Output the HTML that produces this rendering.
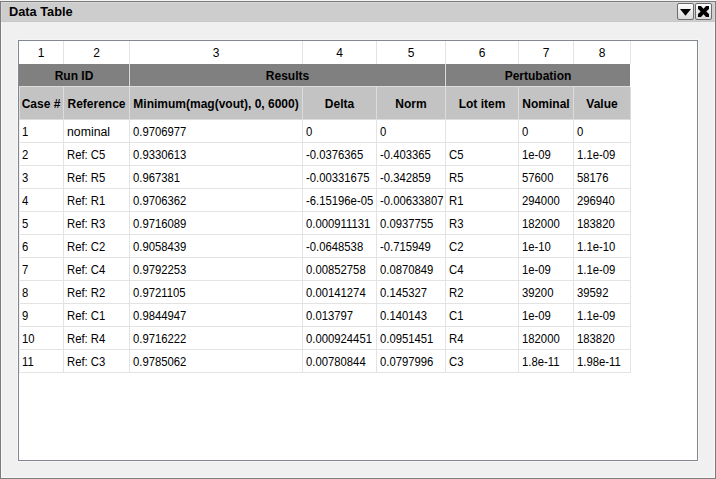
<!DOCTYPE html>
<html><head><meta charset="utf-8"><style>
html,body{margin:0;padding:0;width:716px;height:479px;overflow:hidden;background:#f4f4f4}
body>div{position:absolute}
.title{font:bold 12px/18px "Liberation Sans",sans-serif;transform:scaleX(1.065);transform-origin:0 0;color:#000;white-space:nowrap}
.btn{position:absolute;width:15px;height:15px;border:1px solid #6d6d6d;border-radius:2px;background:linear-gradient(#fdfdfd,#dadada)}
.num{font:12px/23px "Liberation Sans",sans-serif;color:#000;white-space:nowrap}
.hb{font:bold 12px/22px "Liberation Sans",sans-serif;color:#000;white-space:nowrap}
.hd{font:bold 12px/33px "Liberation Sans",sans-serif;color:#000;white-space:nowrap}
.wd{font-size:12.3px !important}
.td{font:11.3px/22px "Liberation Sans",sans-serif;transform:scaleY(1.1);transform-origin:0 14.74px;color:#000;white-space:nowrap;overflow:visible}
</style></head><body>
<div style="left:0px;top:0px;width:716px;height:479px;background:#f4f4f4;"></div>
<div style="left:0px;top:1px;width:716px;height:478px;background:#7b7b7b;"></div>
<div style="left:1px;top:2px;width:714px;height:476px;background:#f8f8f8;"></div>
<div style="left:2px;top:3px;width:712px;height:474px;background:#f0f0f0;"></div>
<div style="left:1px;top:2px;width:714px;height:20px;background:#d6d6d6;"></div>
<div style="left:2px;top:3px;width:712px;height:18px;background:#cdcdcd;"></div>
<div style="left:1px;top:21px;width:714px;height:1px;background:#c9c9c9;"></div>
<div class="title" style="left:9px;top:3px;width:200px;text-align:left;">Data Table</div>
<div class="btn" style="left:677px;top:3px;"></div>
<div class="btn" style="left:695px;top:3px;"></div>
<svg style="position:absolute;left:677px;top:3px" width="17" height="17"><polygon points="3,6 14,6 8.5,12.7" fill="#000"/></svg>
<svg style="position:absolute;left:695px;top:3px" width="17" height="17"><polygon points="3,3 6,3 8.5,5.7 11,3 14,3 14,6 11.3,8.5 14,11 14,14 11,14 8.5,11.3 6,14 3,14 3,11 5.7,8.5 3,6" fill="#000"/></svg>
<div style="left:17px;top:39px;width:682px;height:423px;background:#f6f6f6;"></div>
<div style="left:18px;top:40px;width:680px;height:421px;background:#828790;"></div>
<div style="left:19px;top:41px;width:678px;height:419px;background:#ffffff;"></div>
<div class="num" style="left:19px;top:42px;width:44px;text-align:center;">1</div>
<div style="left:63px;top:41px;width:1px;height:23px;background:#e3e3e3;"></div>
<div class="num" style="left:64px;top:42px;width:65px;text-align:center;">2</div>
<div style="left:129px;top:41px;width:1px;height:23px;background:#e3e3e3;"></div>
<div class="num" style="left:130px;top:42px;width:172px;text-align:center;">3</div>
<div style="left:302px;top:41px;width:1px;height:23px;background:#e3e3e3;"></div>
<div class="num" style="left:303px;top:42px;width:73px;text-align:center;">4</div>
<div style="left:376px;top:41px;width:1px;height:23px;background:#e3e3e3;"></div>
<div class="num" style="left:377px;top:42px;width:68px;text-align:center;">5</div>
<div style="left:445px;top:41px;width:1px;height:23px;background:#e3e3e3;"></div>
<div class="num" style="left:446px;top:42px;width:72px;text-align:center;">6</div>
<div style="left:518px;top:41px;width:1px;height:23px;background:#e3e3e3;"></div>
<div class="num" style="left:519px;top:42px;width:54px;text-align:center;">7</div>
<div style="left:573px;top:41px;width:1px;height:23px;background:#e3e3e3;"></div>
<div class="num" style="left:574px;top:42px;width:56px;text-align:center;">8</div>
<div style="left:630px;top:41px;width:1px;height:23px;background:#e3e3e3;"></div>
<div style="left:19px;top:64px;width:611px;height:22px;background:#808080;"></div>
<div style="left:19px;top:86px;width:611px;height:1px;background:#dcdcdc;"></div>
<div class="hb" style="left:19px;top:65px;width:110px;text-align:center;">Run ID</div>
<div class="hb" style="left:130px;top:65px;width:315px;text-align:center;">Results</div>
<div class="hb" style="left:446px;top:65px;width:184px;text-align:center;">Pertubation</div>
<div style="left:128px;top:64px;width:1px;height:22px;background:#7a7a7a;"></div>
<div style="left:129px;top:64px;width:1px;height:22px;background:#dcdcdc;"></div>
<div style="left:444px;top:64px;width:1px;height:22px;background:#7a7a7a;"></div>
<div style="left:445px;top:64px;width:1px;height:22px;background:#dcdcdc;"></div>
<div style="left:19px;top:87px;width:611px;height:33px;background:#c3c3c3;"></div>
<div class="hd" style="left:19px;top:88px;width:44px;text-align:center;">Case #</div>
<div style="left:63px;top:87px;width:1px;height:33px;background:#dcdcdc;"></div>
<div class="hd" style="left:64px;top:88px;width:65px;text-align:center;">Reference</div>
<div style="left:129px;top:87px;width:1px;height:33px;background:#dcdcdc;"></div>
<div class="hd" style="left:130px;top:88px;width:172px;text-align:center;">Minimum(mag(vout), 0, 6000)</div>
<div style="left:302px;top:87px;width:1px;height:33px;background:#dcdcdc;"></div>
<div class="hd" style="left:303px;top:88px;width:73px;text-align:center;">Delta</div>
<div style="left:376px;top:87px;width:1px;height:33px;background:#dcdcdc;"></div>
<div class="hd" style="left:377px;top:88px;width:68px;text-align:center;">Norm</div>
<div style="left:445px;top:87px;width:1px;height:33px;background:#dcdcdc;"></div>
<div class="hd" style="left:446px;top:88px;width:72px;text-align:center;">Lot item</div>
<div style="left:518px;top:87px;width:1px;height:33px;background:#dcdcdc;"></div>
<div class="hd" style="left:519px;top:88px;width:54px;text-align:center;">Nominal</div>
<div style="left:573px;top:87px;width:1px;height:33px;background:#dcdcdc;"></div>
<div class="hd" style="left:574px;top:88px;width:56px;text-align:center;">Value</div>
<div style="left:630px;top:87px;width:1px;height:33px;background:#dcdcdc;"></div>
<div style="left:19px;top:87px;width:1px;height:33px;background:#dcdcdc;"></div>
<div style="left:19px;top:119px;width:611px;height:1px;background:#dcdcdc;"></div>
<div class="td" style="left:22px;top:121px;width:41px;text-align:left;">1</div>
<div class="td wd" style="left:67px;top:121px;width:62px;text-align:left;">nominal</div>
<div class="td" style="left:133px;top:121px;width:169px;text-align:left;">0.9706977</div>
<div class="td" style="left:306px;top:121px;width:70px;text-align:left;">0</div>
<div class="td" style="left:380px;top:121px;width:65px;text-align:left;">0</div>
<div class="td" style="left:449px;top:121px;width:69px;text-align:left;"></div>
<div class="td" style="left:522px;top:121px;width:51px;text-align:left;">0</div>
<div class="td" style="left:577px;top:121px;width:53px;text-align:left;">0</div>
<div style="left:20px;top:142px;width:610px;height:1px;background:#e3e3e3;"></div>
<div class="td" style="left:22px;top:144px;width:41px;text-align:left;">2</div>
<div class="td" style="left:67px;top:144px;width:62px;text-align:left;">Ref: C5</div>
<div class="td" style="left:133px;top:144px;width:169px;text-align:left;">0.9330613</div>
<div class="td" style="left:306px;top:144px;width:70px;text-align:left;">-0.0376365</div>
<div class="td" style="left:380px;top:144px;width:65px;text-align:left;">-0.403365</div>
<div class="td" style="left:449px;top:144px;width:69px;text-align:left;">C5</div>
<div class="td" style="left:522px;top:144px;width:51px;text-align:left;">1e-09</div>
<div class="td" style="left:577px;top:144px;width:53px;text-align:left;">1.1e-09</div>
<div style="left:20px;top:165px;width:610px;height:1px;background:#e3e3e3;"></div>
<div class="td" style="left:22px;top:167px;width:41px;text-align:left;">3</div>
<div class="td" style="left:67px;top:167px;width:62px;text-align:left;">Ref: R5</div>
<div class="td" style="left:133px;top:167px;width:169px;text-align:left;">0.967381</div>
<div class="td" style="left:306px;top:167px;width:70px;text-align:left;">-0.00331675</div>
<div class="td" style="left:380px;top:167px;width:65px;text-align:left;">-0.342859</div>
<div class="td" style="left:449px;top:167px;width:69px;text-align:left;">R5</div>
<div class="td" style="left:522px;top:167px;width:51px;text-align:left;">57600</div>
<div class="td" style="left:577px;top:167px;width:53px;text-align:left;">58176</div>
<div style="left:20px;top:188px;width:610px;height:1px;background:#e3e3e3;"></div>
<div class="td" style="left:22px;top:190px;width:41px;text-align:left;">4</div>
<div class="td" style="left:67px;top:190px;width:62px;text-align:left;">Ref: R1</div>
<div class="td" style="left:133px;top:190px;width:169px;text-align:left;">0.9706362</div>
<div class="td" style="left:306px;top:190px;width:70px;text-align:left;">-6.15196e-05</div>
<div class="td" style="left:380px;top:190px;width:65px;text-align:left;">-0.00633807</div>
<div class="td" style="left:449px;top:190px;width:69px;text-align:left;">R1</div>
<div class="td" style="left:522px;top:190px;width:51px;text-align:left;">294000</div>
<div class="td" style="left:577px;top:190px;width:53px;text-align:left;">296940</div>
<div style="left:20px;top:211px;width:610px;height:1px;background:#e3e3e3;"></div>
<div class="td" style="left:22px;top:213px;width:41px;text-align:left;">5</div>
<div class="td" style="left:67px;top:213px;width:62px;text-align:left;">Ref: R3</div>
<div class="td" style="left:133px;top:213px;width:169px;text-align:left;">0.9716089</div>
<div class="td" style="left:306px;top:213px;width:70px;text-align:left;">0.000911131</div>
<div class="td" style="left:380px;top:213px;width:65px;text-align:left;">0.0937755</div>
<div class="td" style="left:449px;top:213px;width:69px;text-align:left;">R3</div>
<div class="td" style="left:522px;top:213px;width:51px;text-align:left;">182000</div>
<div class="td" style="left:577px;top:213px;width:53px;text-align:left;">183820</div>
<div style="left:20px;top:234px;width:610px;height:1px;background:#e3e3e3;"></div>
<div class="td" style="left:22px;top:236px;width:41px;text-align:left;">6</div>
<div class="td" style="left:67px;top:236px;width:62px;text-align:left;">Ref: C2</div>
<div class="td" style="left:133px;top:236px;width:169px;text-align:left;">0.9058439</div>
<div class="td" style="left:306px;top:236px;width:70px;text-align:left;">-0.0648538</div>
<div class="td" style="left:380px;top:236px;width:65px;text-align:left;">-0.715949</div>
<div class="td" style="left:449px;top:236px;width:69px;text-align:left;">C2</div>
<div class="td" style="left:522px;top:236px;width:51px;text-align:left;">1e-10</div>
<div class="td" style="left:577px;top:236px;width:53px;text-align:left;">1.1e-10</div>
<div style="left:20px;top:257px;width:610px;height:1px;background:#e3e3e3;"></div>
<div class="td" style="left:22px;top:259px;width:41px;text-align:left;">7</div>
<div class="td" style="left:67px;top:259px;width:62px;text-align:left;">Ref: C4</div>
<div class="td" style="left:133px;top:259px;width:169px;text-align:left;">0.9792253</div>
<div class="td" style="left:306px;top:259px;width:70px;text-align:left;">0.00852758</div>
<div class="td" style="left:380px;top:259px;width:65px;text-align:left;">0.0870849</div>
<div class="td" style="left:449px;top:259px;width:69px;text-align:left;">C4</div>
<div class="td" style="left:522px;top:259px;width:51px;text-align:left;">1e-09</div>
<div class="td" style="left:577px;top:259px;width:53px;text-align:left;">1.1e-09</div>
<div style="left:20px;top:280px;width:610px;height:1px;background:#e3e3e3;"></div>
<div class="td" style="left:22px;top:282px;width:41px;text-align:left;">8</div>
<div class="td" style="left:67px;top:282px;width:62px;text-align:left;">Ref: R2</div>
<div class="td" style="left:133px;top:282px;width:169px;text-align:left;">0.9721105</div>
<div class="td" style="left:306px;top:282px;width:70px;text-align:left;">0.00141274</div>
<div class="td" style="left:380px;top:282px;width:65px;text-align:left;">0.145327</div>
<div class="td" style="left:449px;top:282px;width:69px;text-align:left;">R2</div>
<div class="td" style="left:522px;top:282px;width:51px;text-align:left;">39200</div>
<div class="td" style="left:577px;top:282px;width:53px;text-align:left;">39592</div>
<div style="left:20px;top:303px;width:610px;height:1px;background:#e3e3e3;"></div>
<div class="td" style="left:22px;top:305px;width:41px;text-align:left;">9</div>
<div class="td" style="left:67px;top:305px;width:62px;text-align:left;">Ref: C1</div>
<div class="td" style="left:133px;top:305px;width:169px;text-align:left;">0.9844947</div>
<div class="td" style="left:306px;top:305px;width:70px;text-align:left;">0.013797</div>
<div class="td" style="left:380px;top:305px;width:65px;text-align:left;">0.140143</div>
<div class="td" style="left:449px;top:305px;width:69px;text-align:left;">C1</div>
<div class="td" style="left:522px;top:305px;width:51px;text-align:left;">1e-09</div>
<div class="td" style="left:577px;top:305px;width:53px;text-align:left;">1.1e-09</div>
<div style="left:20px;top:326px;width:610px;height:1px;background:#e3e3e3;"></div>
<div class="td" style="left:22px;top:328px;width:41px;text-align:left;">10</div>
<div class="td" style="left:67px;top:328px;width:62px;text-align:left;">Ref: R4</div>
<div class="td" style="left:133px;top:328px;width:169px;text-align:left;">0.9716222</div>
<div class="td" style="left:306px;top:328px;width:70px;text-align:left;">0.000924451</div>
<div class="td" style="left:380px;top:328px;width:65px;text-align:left;">0.0951451</div>
<div class="td" style="left:449px;top:328px;width:69px;text-align:left;">R4</div>
<div class="td" style="left:522px;top:328px;width:51px;text-align:left;">182000</div>
<div class="td" style="left:577px;top:328px;width:53px;text-align:left;">183820</div>
<div style="left:20px;top:349px;width:610px;height:1px;background:#e3e3e3;"></div>
<div class="td" style="left:22px;top:351px;width:41px;text-align:left;">11</div>
<div class="td" style="left:67px;top:351px;width:62px;text-align:left;">Ref: C3</div>
<div class="td" style="left:133px;top:351px;width:169px;text-align:left;">0.9785062</div>
<div class="td" style="left:306px;top:351px;width:70px;text-align:left;">0.00780844</div>
<div class="td" style="left:380px;top:351px;width:65px;text-align:left;">0.0797996</div>
<div class="td" style="left:449px;top:351px;width:69px;text-align:left;">C3</div>
<div class="td" style="left:522px;top:351px;width:51px;text-align:left;">1.8e-11</div>
<div class="td" style="left:577px;top:351px;width:53px;text-align:left;">1.98e-11</div>
<div style="left:20px;top:372px;width:610px;height:1px;background:#e3e3e3;"></div>
<div style="left:63px;top:120px;width:1px;height:253px;background:#e3e3e3;"></div>
<div style="left:129px;top:120px;width:1px;height:253px;background:#e3e3e3;"></div>
<div style="left:302px;top:120px;width:1px;height:253px;background:#e3e3e3;"></div>
<div style="left:376px;top:120px;width:1px;height:253px;background:#e3e3e3;"></div>
<div style="left:445px;top:120px;width:1px;height:253px;background:#e3e3e3;"></div>
<div style="left:518px;top:120px;width:1px;height:253px;background:#e3e3e3;"></div>
<div style="left:573px;top:120px;width:1px;height:253px;background:#e3e3e3;"></div>
<div style="left:630px;top:120px;width:1px;height:253px;background:#e3e3e3;"></div>
<div style="left:19px;top:120px;width:1px;height:253px;background:#efefef;"></div>
</body></html>
